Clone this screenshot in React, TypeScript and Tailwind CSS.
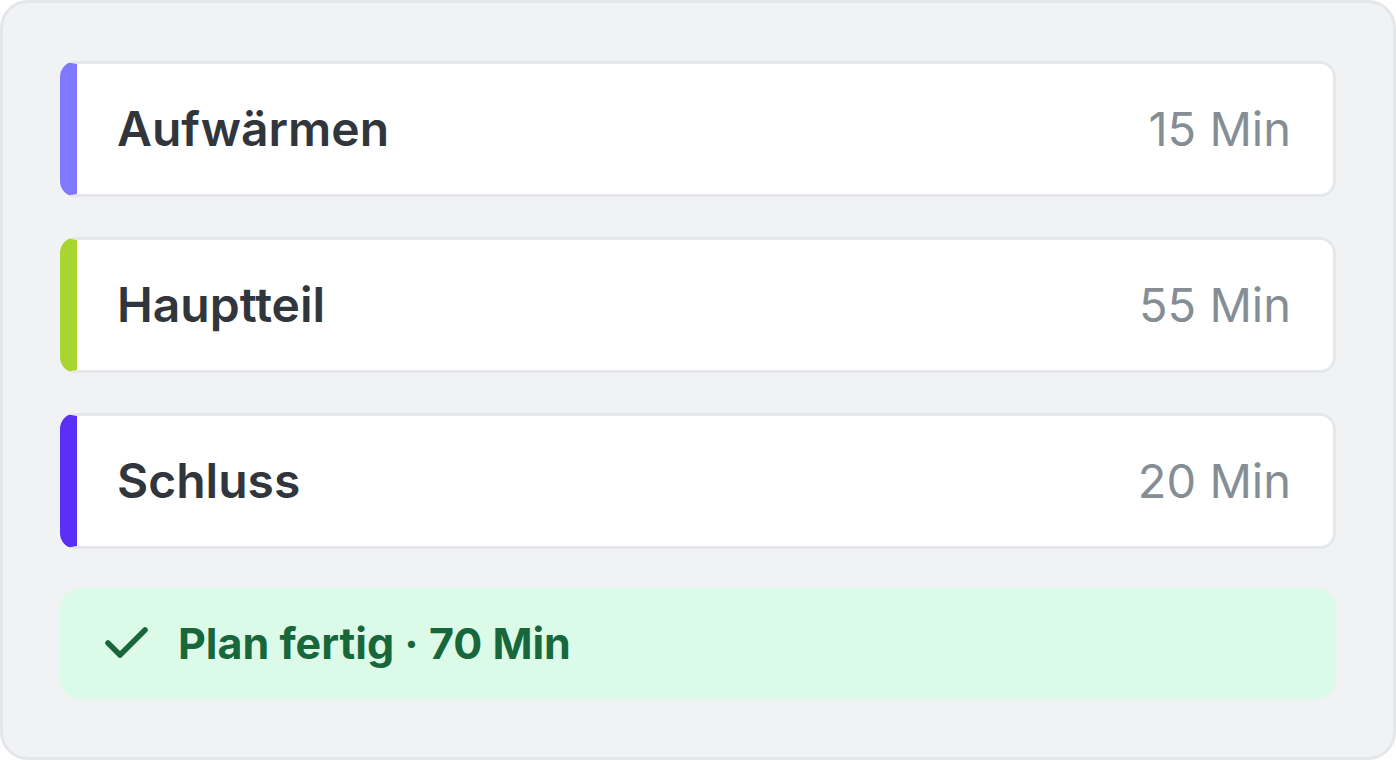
import React from 'react';

const sections = [
  { name: 'Aufwärmen', minutes: 15, accent: 'border-l-[#8079ff]' },
  { name: 'Hauptteil', minutes: 55, accent: 'border-l-[#a9d531]' },
  { name: 'Schluss', minutes: 20, accent: 'border-l-[#5a2ff6]' },
];

export default function App() {
  return (
    <div
      className="flex h-[760px] w-[1396px] flex-col rounded-[28px] border-[3px] border-[#e4e6e9] bg-[#f1f2f4] px-[57px] pt-[58px]"
      style={{ fontFamily: 'Inter, "Noto Sans", sans-serif' }}
    >
      <div className="flex flex-col gap-[40px]">
        {sections.map((section) => (
          <div
            key={section.name}
            className={`flex h-[136px] items-center justify-between rounded-[16px] border-[3px] border-l-[17px] border-[#e5e7ea] bg-white pl-[40px] pr-[42px] ${section.accent}`}
          >
            <span className="text-[48px] font-semibold text-[#30363c]">{section.name}</span>
            <span className="text-[47px] font-normal text-[#868e95]">{section.minutes} Min</span>
          </div>
        ))}
      </div>

      <div className="mt-[39px] flex h-[111px] items-center gap-[28px] rounded-[20px] bg-[#dcfae8] pl-[44px]">
        <svg width="46" height="36" viewBox="0 0 46 36" fill="none" className="shrink-0">
          <polyline
            points="4,17 16,29 41,4"
            stroke="#17673a"
            strokeWidth="5.5"
            strokeLinecap="round"
            strokeLinejoin="round"
          />
        </svg>
        <span className="text-[43px] font-bold text-[#17673a]">Plan fertig · 70 Min</span>
      </div>
    </div>
  );
}
